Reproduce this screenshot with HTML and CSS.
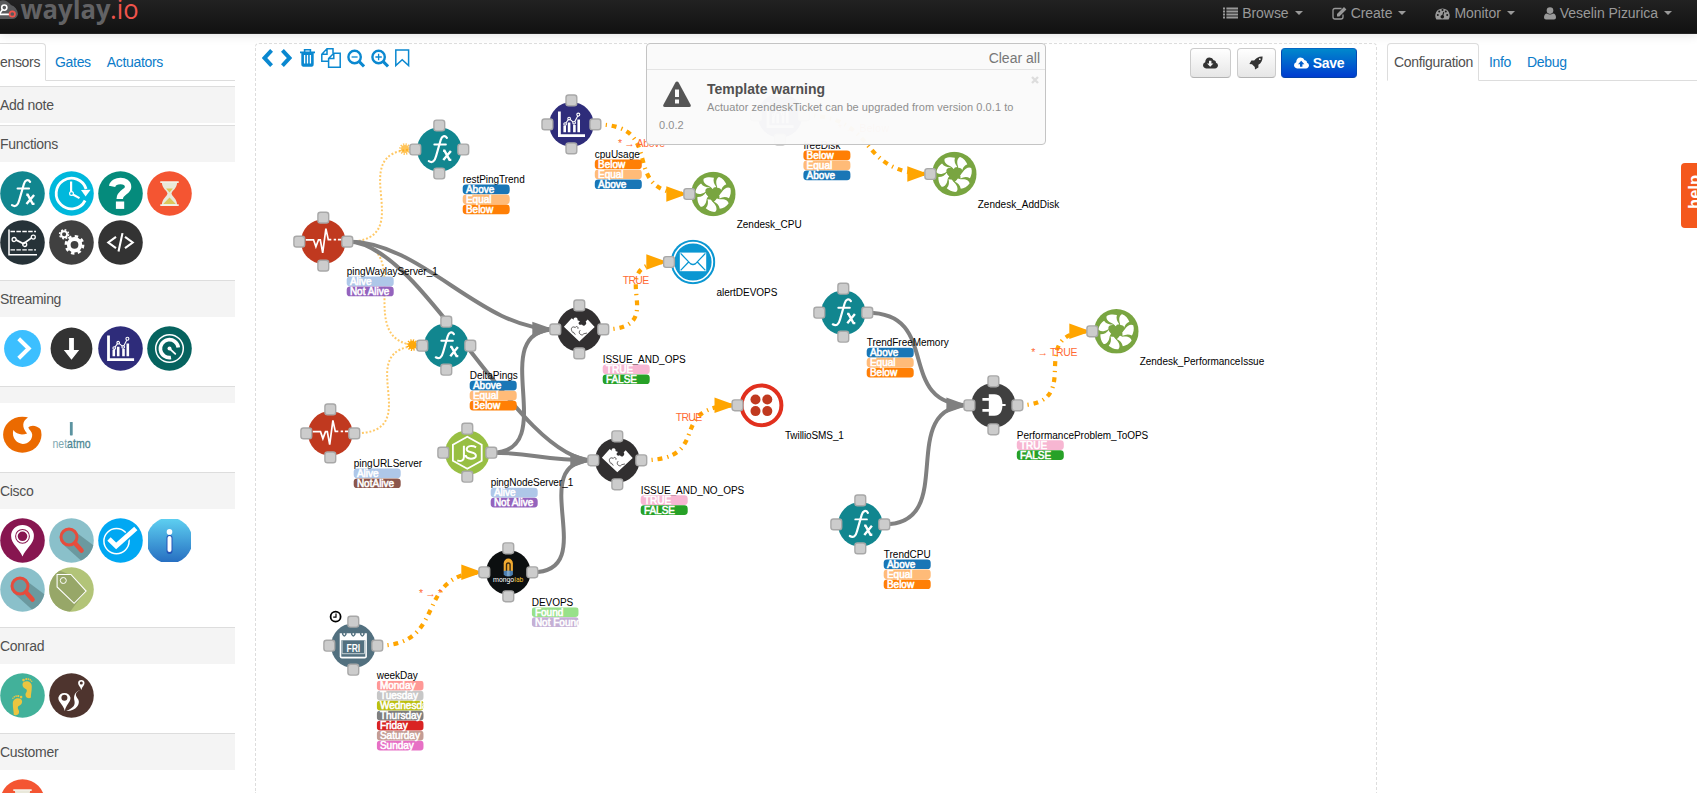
FILE: index.html
```
<!DOCTYPE html>
<html lang="en">
<head>
<meta charset="utf-8">
<title>waylay.io</title>
<link rel="stylesheet" href="styles.css">
</head>
<body>
<svg class="defs" aria-hidden="true">
  <defs>
    <linearGradient id="info-fill" x1="0" y1="0" x2="0" y2="1"><stop offset="0" stop-color="#5fd2f2"/><stop offset="1" stop-color="#256cc0"/></linearGradient>
    <clipPath id="disc"><circle r="22.3"/></clipPath>
    <clipPath id="square"><rect x="-21.6" y="-21.6" width="43.2" height="43.2"/></clipPath>
    <clipPath id="tag-clip"><rect x="23.4" y="0" width="47" height="120"/></clipPath>
    <symbol id="i-fx" viewBox="-22.5 -22.5 45 45">
      <circle r="22.3" fill="#11868f"/>
      <g fill="none" stroke="#fff" stroke-linecap="round"><path stroke-width="2.2" d="M7.6-11.6C5.5-14.8 2.6-13.5 1.4-9.5L-3.2 6.5C-4.6 12-7 13.8-10.5 11.6"/><path stroke-width="1.9" d="M-5-5H6.6"/><path stroke-width="2.4" stroke-linecap="butt" d="M3.8 1.2h1.4l5 9.2h1.8M11.6 1.4L4 10.6"/></g>
    </symbol>
    <symbol id="i-timer" viewBox="-22.5 -22.5 45 45">
      <circle r="22.3" fill="#00b8dc"/>
      <path d="M14.6-4.5A15.3 15.3 0 1 0 13.6 7" fill="none" stroke="#fff" stroke-width="2.8"/>
      <path d="M9.5-3.6l9.6-.2-5 6.8z" fill="#fff"/>
      <path d="M-.4-12V0L8 4.6" fill="none" stroke="#fff" stroke-width="2.2"/><circle r="1.9" fill="#00b8dc" stroke="#fff" stroke-width="1.2"/>
    </symbol>
    <symbol id="i-question" viewBox="-22.5 -22.5 45 45">
      <circle r="22.3" fill="#058b7c"/>
      <path d="M-8.4-7.2C-7-14.3 7.6-14.6 7.6-6.6C7.6-1.6-.8-1.4-.8 5.4" fill="none" stroke="#fff" stroke-width="6.4"/><rect x="-4.6" y="8" width="8.3" height="7.4" fill="#fff"/>
    </symbol>
    <symbol id="i-hourglass" viewBox="-22.5 -22.5 45 45">
      <circle r="22.3" fill="#f45532"/>
      <path d="M-7.6-11H7.6C7.6-5 2.5-3 2 0C2.5 3 7.6 5 7.6 11.5H-7.6C-7.6 5-2.5 3-2 0C-2.5-3-7.6-5-7.6-11z" fill="#e9e8da"/>
      <path d="M-3.4-5H3.4L0-1zM0 4L6.3 10.5H-6.3z" fill="#dcc65b"/><path d="M-9.2-11.4H9.2M-9.2 11.7H9.2" stroke="#f1efe6" stroke-width="1.8"/>
    </symbol>
    <symbol id="i-lines" viewBox="-22.5 -22.5 45 45">
      <circle r="22.3" fill="#263238"/>
      <g fill="none" stroke="#fff"><path stroke-width="1.5" d="M-13.5-13V12.2H14.5"/><path stroke-width="1.3" stroke-dasharray="4.5 1.4" d="M-12-11H13.5M-12 7.3H13.5"/><path stroke-width="1.8" d="M-6.6-2.6L1 1.3L9-4.6"/><circle cx="-8.4" cy="-3" r="2" stroke-width="1.3"/><circle cx="2.2" cy="2" r="2" stroke-width="1.3"/><circle cx="10.8" cy="-5.4" r="2" stroke-width="1.3"/></g>
    </symbol>
    <symbol id="i-gears" viewBox="-22.5 -22.5 45 45">
      <circle r="22.3" fill="#404040"/>
      <g fill="none" stroke="#fff"><circle cx="3" cy="2.3" r="5.8" stroke-width="3.8"/><circle cx="3" cy="2.3" r="8.6" stroke-width="2.6" stroke-dasharray="3.4 3.35"/><circle cx="-7.4" cy="-8.2" r="3" stroke-width="1.9"/><circle cx="-7.4" cy="-8.2" r="4.5" stroke-width="1.5" stroke-dasharray="1.8 1.73"/></g>
    </symbol>
    <symbol id="i-code" viewBox="-22.5 -22.5 45 45">
      <circle r="22.3" fill="#333"/>
      <path d="M-4.5-5.6L-12.2 0L-4.5 5.6M4.5-5.6L12.2 0L4.5 5.6M2-9.4L-2 9" fill="none" stroke="#fff" stroke-width="2.1"/>
    </symbol>
    <symbol id="i-next" viewBox="-22.5 -22.5 45 45"><circle r="18.4" fill="#3cbfff"/><path d="M-3.8-9.8L6.2 0L-3.8 9.8" fill="none" stroke="#fff" stroke-width="4"/></symbol>
    <symbol id="i-down" viewBox="-22.5 -22.5 45 45"><circle r="20.9" fill="#333"/><path d="M-2.4-10.5H2.4V1.5H7.7L0 11.3L-7.7 1.5H-2.4z" fill="#fff"/></symbol>
    <symbol id="i-chart" viewBox="-22.5 -22.5 45 45">
      <circle r="22.3" fill="#2e2c7a"/>
      <path d="M-12-13V11.2H13.6" fill="none" stroke="#fff" stroke-width="2.8"/>
      <path d="M-8 1.4h2.6v6.4h-2.6zM-3.6-1.8h2.6v9.6h-2.6zM1.7.6h2.6v7.2h-2.6zM6-5h2.6V7.8H6z" fill="#fff"/>
      <g fill="#2e2c7a" stroke="#fff" stroke-width="1.1"><path fill="none" d="M-6.3-.4L-2.3-5.8L2.7-1.6L6.9-9.5"/><circle cx="-6.3" cy="-.4" r="1.3"/><circle cx="-2.3" cy="-5.8" r="1.3"/><circle cx="2.7" cy="-1.6" r="1.3"/><circle cx="6.9" cy="-9.8" r="1.5"/></g>
    </symbol>
    <symbol id="i-gauge" viewBox="-22.5 -22.5 45 45">
      <circle r="22.3" fill="#06635f"/>
      <g fill="none" stroke="#fff"><circle r="13.8" stroke-width="1.5"/><path stroke-width="3.6" d="M1.5 9A9 9 0 1 1 8.8-1"/><path stroke-width="1.8" stroke-linecap="round" d="M-.4-.4L5.8 5.4"/></g><circle r="2" fill="#fff"/>
    </symbol>
    <symbol id="i-flame" viewBox="-22.5 -22.5 45 45">
      <ellipse cx="-.2" cy=".2" rx="19.2" ry="18" fill="#eb6a00"/>
      <path d="M5.4-20V-17C0-13.6-1.2-7.6 4.6-1C-.8 1-6 0-9.2-4.4C-11.2 4-5 9.4.3 9.4C6 9.4 10 5 9.7 0C9.5-3 6.6-4.6 5.8-7C8-9.2 13-10.4 19-4.6V-20z" fill="#fff"/>
    </symbol>
    <symbol id="i-netatmo" viewBox="-22.5 -22.5 45 45">
      <rect x="-1.6" y="-12.5" width="2.8" height="13.4" rx=".6" fill="#5b93a0"/>
      <text class="netatmo" x="-19" y="13.6" textLength="38" lengthAdjust="spacingAndGlyphs">net<tspan class="netatmo-strong">atmo</tspan></text>
    </symbol>
    <symbol id="i-pin" viewBox="-22.5 -22.5 45 45">
      <circle r="22.3" fill="#871650"/><path fill-rule="evenodd" d="M0 16C-3 8-11.4 3.5-11.4-4.6A11.4 11 0 0 1 11.4-4.6C11.4 3.5 3 8 0 16zM0-11.6a7.4 7.4 0 1 0 0 14.8a7.4 7.4 0 1 0 0-14.8z" fill="#fff"/><circle cy="-4.2" r="5.6" fill="none" stroke="#fff" stroke-width="1.6"/>
    </symbol>
    <symbol id="i-search" viewBox="-22.5 -22.5 45 45">
      <circle r="22.3" fill="#8ac0ca"/><path clip-path="url(#disc)" d="M3.5-9L26 8V25H15L-9.5 3z" fill="#6b999f"/>
      <circle cx="-2.5" cy="-3.5" r="8" fill="#6b999f" stroke="#e74c3c" stroke-width="3"/><path d="M3.6 2.8L10 10" stroke="#e74c3c" stroke-width="4.6" stroke-linecap="round"/>
    </symbol>
    <symbol id="i-check" viewBox="-22.5 -22.5 45 45">
      <circle r="22.3" fill="#00a8f3"/><circle cx="-4" cy=".6" r="12.6" fill="none" stroke="#fff" stroke-width="1.5"/><path d="M-11.5-1L-4.3 6.4L15-12" fill="none" stroke="#00a8f3" stroke-width="7.6"/><path d="M-11.5-1.5L-4.3 5.4L15.3-12" fill="none" stroke="#fff" stroke-width="4.8"/>
    </symbol>
    <symbol id="i-info" viewBox="-22.5 -22.5 45 45">
      <circle r="23" clip-path="url(#square)" fill="url(#info-fill)"/><circle cy="-8.6" r="2.8" fill="#fff"/><path d="M0-2.6V10.4" stroke="#2456b8" stroke-width="6" stroke-linecap="round"/><path d="M0-2.6V9.6" stroke="#fff" stroke-width="4" stroke-linecap="round"/>
    </symbol>
    <symbol id="i-tag" viewBox="-22.5 -22.5 45 45">
      <circle r="22.3" fill="#b2c478"/><path clip-path="url(#disc)" d="M-24-24L0-14L14.6 1L-2 23H-24z" fill="#97a768"/><path d="M-14.4-15H-.6L14.6 1.6L2.6 13.8L-14.4-2.6z" fill="#97a768" stroke="#fff" stroke-width="1.1"/><circle cx="-8.2" cy="-9" r="3" fill="none" stroke="#fff"/>
    </symbol>
    <symbol id="i-feet" viewBox="-22.5 -22.5 45 45">
      <circle r="22.3" fill="#42b19a"/>
      <g id="foot"><path d="M0-11C0-15 9-16 9.3-9C9.3-4 8.2-1 8.4 2C7.6 3.4 3 3 3-.5C3-3.2 5-3.4 4-6C2.6-7 0-8 0-11z" fill="#ecc540"/><g fill="#ecc540"><circle cx="1" cy="-15.4" r="1.3"/><circle cx="3.8" cy="-16.4" r="1.1"/><circle cx="6" cy="-16.4" r=".9"/><circle cx="7.8" cy="-15.6" r=".8"/><circle cx="9.2" cy="-14.2" r=".7"/></g></g>
      <g transform="translate(-.4 17) scale(-1 1)"><use href="#foot"/></g>
    </symbol>
    <symbol id="i-route" viewBox="-22.5 -22.5 45 45">
      <circle r="22.3" fill="#4e342e"/>
      <path fill-rule="evenodd" d="M-6.7 15.5C-8 9-13.2 7-13.2 2.2A6.3 6.3 0 0 1-1 2.2C-1 7-5.6 9-6.7 15.5zM-7.1-.7a3 3 0 1 0 0 6a3 3 0 1 0 0-6zM9.8-5.6C9-8.6 6.6-9.6 6.6-12.4A3.2 3.2 0 0 1 13-12.4C13-9.6 10.6-8.6 9.8-5.6zM9.8-14a1.5 1.5 0 1 0 0 3a1.5 1.5 0 1 0 0-3z" fill="#fff"/>
      <path d="M9-5.4C2-2.6 4.4 1 6.8 4C9 8 5 15.8-5.2 15.6C2.6 12 3.6 9.6 3 5.6C2 1.6 2.4-3.6 9-5.4z" fill="#fff"/>
    </symbol>
    <symbol id="i-pulse" viewBox="-22.5 -22.5 45 45">
      <circle r="22.3" fill="#c0391f"/><path d="M-17.5-1.8H-9.8L-7.4 5.2L-4.8-1.8L-3-1.8L-.6 11.2L2.6-13L5-2H8M10.4-2h2.4M14.6-2H18" fill="none" stroke="#fff" stroke-width="1.7"/>
    </symbol>
    <symbol id="i-node" viewBox="-22.5 -22.5 45 45">
      <circle r="22.3" fill="#98bf43"/><path d="M0-16L14.4-8V8L0 16L-14.4 8V-8z" fill="none" stroke="#fff" stroke-width="1.8"/><path d="M-3.4-7V4.6C-3.4 8-6.6 9-10 7.6M8.8-5.4C5-7.6-.6-7-.6-3.4C-.6.8 8.6-1.6 8.6 3.2C8.6 7-1.6 7-1.6 2.4" fill="none" stroke="#fff" stroke-width="2"/>
    </symbol>
    <symbol id="i-puzzle" viewBox="-22.5 -22.5 45 45">
      <circle r="22.3" fill="#312f30"/>
      <path d="M-15.4-2.6L-7.6-11.2L-5.6-9.6Q-6-12-3.6-12Q-1.2-11.6-1.8-9.2L.8-8.2Q-1.6-6.6-.2-5Q1.4-4.2 2.6-5Q4.4-2.6 6.2-4.6Q7.8-6.4 6.4-8L8.4-10L15.4-2.4L0 12z" fill="#fff"/>
      <path d="M-6.6 3C-10-1.6-6-3.6-4.2-1.8C-3-4-.6-2.4-1.4-.6M3 5.6C0 5.4-1 2.6 1 .8M3 5.6C5 3.4 6.4 4.4 7.6 3.6M-6.6 3C-5 2-5.6 5-3.8 5" fill="none" stroke="#312f30" stroke-width=".8"/>
    </symbol>
    <symbol id="i-gate" viewBox="-22.5 -22.5 45 45">
      <circle r="22.3" fill="#404040"/><path d="M-4.6-11H1C6.6-11 8.8-7 9-1.4H12.2V.8H9C8.8 6.4 6.6 10.4 1 10.4H-4.6V6.4H-11V3.6H-4.6V-4.6H-11V-7.4H-4.6z" fill="#fff"/>
    </symbol>
    <symbol id="i-mongo" viewBox="-22.5 -22.5 45 45">
      <circle r="22.3" fill="#0c0f10"/><path d="M-4.6-9A4.6 4.8 0 0 1 4.6-9V-1H-4.6z" fill="#f3ab30"/><path d="M-1.8-1V-7.5A1.8 1.8 0 0 1 1.8-7.5V-1" fill="none" stroke="#3a2c14" stroke-width="1.4"/><path d="M-4.6-1.6H4.6V2.4L2.4 4H-2.4L-4.6 2.4z" fill="#4c7fb0"/><path d="M-1.4-1.6h2.8V4h-2.8z" fill="#7aa4c8"/>
      <text class="mongo" x="-15.3" y="10" textLength="30.4" lengthAdjust="spacingAndGlyphs">mongo<tspan class="mongo-lab">lab</tspan></text>
    </symbol>
    <symbol id="i-calendar" viewBox="-22.5 -22.5 45 45">
      <circle r="22.3" fill="#52707f"/><path d="M-13.6-12.4H13.6V10.6Q13.6 12.8 11.4 12.8H-11.4Q-13.6 12.8-13.6 10.6z" fill="#fff"/><rect x="-12" y="-5.4" width="24" height="16.4" fill="#52707f"/><path d="M-11.2-5.2V8H11.2V-5.2" fill="none" stroke="#dfe6e9" stroke-width=".8"/>
      <g fill="none" stroke="#52707f" stroke-width="1.5"><path d="M-10.6-15v3.6q1.6 3.4 3.2 0V-15M-1.6-15v3.6q1.6 3.4 3.2 0V-15M7.4-15v3.6q1.6 3.4 3.2 0V-15"/></g>
      <text class="fri" x="-6.9" y="6" textLength="13.8" lengthAdjust="spacingAndGlyphs">FRI</text>
    </symbol>
    <symbol id="i-mail" viewBox="-22.5 -22.5 45 45">
      <circle r="22.3" fill="#0b97d2"/><circle r="19.4" fill="none" stroke="#fff" stroke-width="1.6"/><rect x="-13.2" y="-9.4" width="26.4" height="18.6" fill="#fff"/><path d="M-12.4-8.6L-2.6 1.6Q0 3.4 2.6 1.6L12.4-8.6M-12.4 8.4L-4.6.2M12.4 8.4L4.6.2" fill="none" stroke="#0b97d2" stroke-width="1.3"/>
    </symbol>
    <symbol id="i-twilio" viewBox="-22.5 -22.5 45 45">
      <circle r="19.9" fill="#fff" stroke="#e1301e" stroke-width="4"/><g fill="#c0391f"><circle cx="-6" cy="-5.8" r="5"/><circle cx="5.8" cy="-5.8" r="5"/><circle cx="-6" cy="5.8" r="5"/><circle cx="5.8" cy="5.8" r="5"/></g>
    </symbol>
    <symbol id="i-zendesk" viewBox="-22.5 -22.5 45 45">
      <circle r="22.3" fill="#79a541"/>
      <g fill="#fff"><path id="leaf" d="M-3.4-7.6C-8.8-9.4-10.6-13-9.6-15.2C-6.4-17.2-2.4-17 .6-16.2C-.4-12.6.8-9.8 3-7Q0-7-.8-4.6Q-1.6-6.6-3.4-7.6z"/><use href="#leaf" transform="rotate(51.4)"/><use href="#leaf" transform="rotate(102.9)"/><use href="#leaf" transform="rotate(154.3)"/><use href="#leaf" transform="rotate(205.7)"/><use href="#leaf" transform="rotate(257.1)"/><use href="#leaf" transform="rotate(308.6)"/></g>
      <path d="M0 8.4C-4 4.2-8-.4-8-3C-8-6.8-2.4-7.4 0-4.4C2.4-7.4 8-6.8 8-3C8-.4 4 4.2 0 8.4z" fill="#79a541"/>
    </symbol>
    <g id="port"><rect x="-5.4" y="-5.4" width="10.8" height="10.8" rx="2.6" fill="#ccc" stroke="#a8a8a8" stroke-width="1.4"/></g>
    <g id="ports"><use href="#port" y="-24"/><use href="#port" x="24"/><use href="#port" y="24"/><use href="#port" x="-24"/></g>
    <path id="tag" d="M26.8 0h40.2q3.4 0 3.4 3.4v2.9q0 3.4-3.4 3.4H26.8q-3.4 0-3.4-3.4V3.4Q23.4 0 26.8 0z"/>
    <path id="arrow" d="M-23-7.7L-3-.6V.6L-23 7.7z"/>
  </defs>
</svg>

<header class="navbar">
  <svg class="logo" width="140" height="34" viewBox="0 0 140 34">
    <path d="M-6 18V4Q4-4 11 5Q17 7 18 14Q17 19 12 19H-6z" fill="#58595b"/>
    <circle cx="4.3" cy="7.6" r="2.6" fill="none" stroke="#fff" stroke-width="1.6"/><path d="M2.6 9.6L-1 14.4H9" fill="none" stroke="#fff" stroke-width="1.6"/><circle cx="12.3" cy="14" r="2.7" fill="none" stroke="#f1544c" stroke-width="1.7"/>
    <text class="logo-name" x="20.6" y="19" textLength="90" lengthAdjust="spacingAndGlyphs">waylay</text>
    <text class="logo-io" x="110" y="19" textLength="28.5" lengthAdjust="spacingAndGlyphs">.io</text>
  </svg>
  <nav class="menu">
    <a class="menu-item"><svg width="15" height="12" viewBox="0 0 15 12"><path d="M0 1.5h2M3.4 1.5H15M0 4.5h2M3.4 4.5H15M0 7.5h2M3.4 7.5H15M0 10.5h2M3.4 10.5H15" stroke="#999" stroke-width="1.8"/></svg><span>Browse</span><i class="caret"></i></a>
    <a class="menu-item"><svg width="15" height="13" viewBox="0 0 15 13"><path d="M9.5 1.5H3Q1 1.5 1 3.5V10Q1 12 3 12H9Q11 12 11 10V7.5" fill="none" stroke="#999" stroke-width="1.3"/><path d="M5 9.4V7L12 0L14.4 2.4L7.4 9.4z" fill="#999"/></svg><span>Create</span><i class="caret"></i></a>
    <a class="menu-item"><svg width="15" height="13" viewBox="0 0 15 13"><path d="M1.4 12.4A7.2 7.2 0 1 1 13.6 12.4z" fill="#999"/><g fill="#191919"><circle cx="2.8" cy="8" r="1"/><circle cx="4.2" cy="4.4" r="1"/><circle cx="7.5" cy="3" r="1"/><circle cx="10.8" cy="4.4" r="1"/><circle cx="12.2" cy="8" r="1"/><circle cx="7.3" cy="9.8" r="1.8"/></g><path d="M7.3 9.8L8.8 5" stroke="#191919" stroke-width="1.1"/></svg><span>Monitor</span><i class="caret"></i></a>
    <a class="menu-item"><svg class="user" width="12" height="13" viewBox="0 0 12 13"><circle cx="6" cy="3.6" r="3.3" fill="#999"/><path d="M0 10.6Q0 6.6 3 6.4Q6 8.6 9 6.4Q12 6.6 12 10.6Q12 12.6 10 12.6H2Q0 12.6 0 10.6z" fill="#999"/></svg><span>Veselin Pizurica</span><i class="caret"></i></a>
  </nav>
</header>

<main class="main">
  <aside class="palette">
    <div class="tabs palette-tabs"><a class="tab active">Sensors</a><a class="tab">Gates</a><a class="tab">Actuators</a></div>
    <h4 class="group note">Add note</h4>
    <h4 class="group">Functions</h4>
    <div class="icons">
      <svg><use href="#i-fx"/></svg><svg><use href="#i-timer"/></svg><svg><use href="#i-question"/></svg><svg><use href="#i-hourglass"/></svg>
      <svg><use href="#i-lines"/></svg><svg><use href="#i-gears"/></svg><svg><use href="#i-code"/></svg>
    </div>
    <h4 class="group">Streaming</h4>
    <div class="icons"><svg><use href="#i-next"/></svg><svg><use href="#i-down"/></svg><svg><use href="#i-chart"/></svg><svg><use href="#i-gauge"/></svg></div>
    <h4 class="group blank"></h4>
    <div class="icons"><svg><use href="#i-flame"/></svg><svg><use href="#i-netatmo"/></svg></div>
    <h4 class="group">Cisco</h4>
    <div class="icons"><svg><use href="#i-pin"/></svg><svg><use href="#i-search"/></svg><svg><use href="#i-check"/></svg><svg><use href="#i-info"/></svg><svg><use href="#i-search"/></svg><svg><use href="#i-tag"/></svg></div>
    <h4 class="group">Conrad</h4>
    <div class="icons"><svg><use href="#i-feet"/></svg><svg><use href="#i-route"/></svg></div>
    <h4 class="group">Customer</h4>
    <div class="icons"><svg><use href="#i-hourglass"/></svg></div>
  </aside>

  <section class="workspace">
    <svg class="diagram" viewBox="255 43 1122 750" width="1122" height="750">
      <g class="dots">
        <path d="M347.3 241.6C423 241.6 339 149.5 415 149.5"/>
        <path d="M347.3 241.6C423 241.6 346 345.7 422 345.7"/>
        <path d="M354.3 433.4C430 433.4 346 345.7 422 345.7"/>
      </g>
      <g class="wires">
        <path d="M347.3 241.6C423.3 241.6 479.3 329.4 555.3 329.4"/>
        <path d="M347.3 241.6C423.3 241.6 517.3 460.3 593.3 460.3"/>
        <path d="M491.3 452.7C563 452.7 483 329.4 555.3 329.4"/>
        <path d="M491.3 452.7C537 452.7 537 460.3 593.3 460.3"/>
        <path d="M532.3 572.3C603 572.3 522 460.3 593.3 460.3"/>
        <path d="M867.3 312.7C943.3 312.7 893.4 405.3 969.4 405.3"/>
        <path d="M884.3 524.3C960 524.3 894 405.3 969.4 405.3"/>
      </g>
      <g class="dashes">
        <path d="M595.5 124.4C671 124.4 614 194 689.3 194"/>
        <path d="M804 115.3C880 115.3 854.3 174 930.3 174"/>
        <path d="M603.3 329.4C676 329.4 597 262 669.3 262"/>
        <path d="M641.3 460.3C717 460.3 662 405.3 737.5 405.3"/>
        <path d="M1017.4 405.3C1090 405.3 1020 331.3 1092.3 331.3"/>
        <path d="M377.3 645.7C450 645.7 412 572.3 484.3 572.3"/>
      </g>
      <g fill="#808080"><use href="#arrow" x="555.3" y="329.4"/><use href="#arrow" x="593.3" y="460.3"/><use href="#arrow" x="969.4" y="405.3"/></g>
      <g fill="#ffa500"><use href="#arrow" x="689.3" y="194"/><use href="#arrow" x="930.3" y="174"/><use href="#arrow" x="669.3" y="262"/><use href="#arrow" x="737.5" y="405.3"/><use href="#arrow" x="1092.3" y="331.3"/><use href="#arrow" x="484.3" y="572.3"/></g>
      <g fill="none" stroke="#ffa500"><g opacity=".65"><circle cx="405" cy="149" r="2" stroke-width="4"/><circle cx="405" cy="149" r="4.7" stroke-width="2.4" stroke-dasharray="1.2 1.26"/></g><g opacity=".95"><circle cx="412.3" cy="345" r="2" stroke-width="4.4"/><circle cx="412.3" cy="345" r="4.7" stroke-width="2.4" stroke-dasharray="1.2 1.26"/></g></g>
      <g class="edge-label">
        <text x="618" y="147" textLength="47">* → Above</text><text x="838" y="132" textLength="51">* → Below</text>
        <text x="622.8" y="284" textLength="26.4">TRUE</text><text x="675.8" y="421" textLength="26.4">TRUE</text>
        <text x="1031.2" y="356" textLength="46.4">* → TRUE</text><text x="419" y="596.5" textLength="23">* → *</text>
      </g>

      <g class="node" transform="translate(439.3 149.5)"><use href="#i-fx" x="-22.5" y="-22.5" width="45" height="45"/><use href="#ports"/><text x="23.4" y="33.6" textLength="62">restPingTrend</text>
        <g class="tags" transform="translate(0 35)"><use href="#tag" class="blue"/><use href="#tag" class="peach" y="10"/><use href="#tag" class="orange" y="20"/><text x="26.6" y="8.4">Above</text><text x="26.6" y="18.4">Equal</text><text x="26.6" y="28.4">Below</text></g></g>
      <g class="node" transform="translate(323.3 241.6)"><use href="#i-pulse" x="-22.5" y="-22.5" width="45" height="45"/><use href="#ports"/><text x="23.4" y="33.6" textLength="91">pingWaylayServer_1</text>
        <g class="tags" transform="translate(0 35)"><use href="#tag" class="sky"/><use href="#tag" class="purple" y="10"/><text x="26.6" y="8.4">Alive</text><text x="26.6" y="18.4">Not Alive</text></g></g>
      <g class="node" transform="translate(446.3 345.7)"><use href="#i-fx" x="-22.5" y="-22.5" width="45" height="45"/><use href="#ports"/><text x="23.4" y="33.6" textLength="48">DeltaPings</text>
        <g class="tags" transform="translate(0 35)"><use href="#tag" class="blue"/><use href="#tag" class="peach" y="10"/><use href="#tag" class="orange" y="20"/><text x="26.6" y="8.4">Above</text><text x="26.6" y="18.4">Equal</text><text x="26.6" y="28.4">Below</text></g></g>
      <g class="node" transform="translate(330.3 433.4)"><use href="#i-pulse" x="-22.5" y="-22.5" width="45" height="45"/><use href="#ports"/><text x="23.4" y="33.6" textLength="68.5">pingURLServer</text>
        <g class="tags" transform="translate(0 35)"><use href="#tag" class="sky"/><use href="#tag" class="brown" y="10"/><text x="26.6" y="8.4">Alive</text><text x="26.6" y="18.4">NotAlive</text></g></g>
      <g class="node" transform="translate(467.3 452.7)"><use href="#i-node" x="-22.5" y="-22.5" width="45" height="45"/><use href="#ports"/><text x="23.4" y="33.6" textLength="82.5">pingNodeServer_1</text>
        <g class="tags" transform="translate(0 35)"><use href="#tag" class="sky"/><use href="#tag" class="purple" y="10"/><text x="26.6" y="8.4">Alive</text><text x="26.6" y="18.4">Not Alive</text></g></g>
      <g class="node" transform="translate(571.4 124.4)"><use href="#i-chart" x="-22.5" y="-22.5" width="45" height="45"/><use href="#ports"/><text x="23.4" y="33.6" textLength="45">cpuUsage</text>
        <g class="tags" transform="translate(0 35)"><use href="#tag" class="orange"/><use href="#tag" class="peach" y="10"/><use href="#tag" class="blue" y="20"/><text x="26.6" y="8.4">Below</text><text x="26.6" y="18.4">Equal</text><text x="26.6" y="28.4">Above</text></g></g>
      <g class="node" transform="translate(780 115.5)"><use href="#i-chart" x="-22.5" y="-22.5" width="45" height="45"/><use href="#ports"/><text x="23.4" y="33.6" textLength="37">freeDisk</text>
        <g class="tags" transform="translate(0 35)"><use href="#tag" class="orange"/><use href="#tag" class="peach" y="10"/><use href="#tag" class="blue" y="20"/><text x="26.6" y="8.4">Below</text><text x="26.6" y="18.4">Equal</text><text x="26.6" y="28.4">Above</text></g></g>
      <g class="node" transform="translate(579.3 329.4)"><use href="#i-puzzle" x="-22.5" y="-22.5" width="45" height="45"/><use href="#ports"/><text x="23.4" y="33.6" textLength="83">ISSUE_AND_OPS</text>
        <g class="tags" transform="translate(0 35)"><use href="#tag" class="pink"/><use href="#tag" class="green" y="10"/><text x="26.6" y="8.4">TRUE</text><text x="26.6" y="18.4">FALSE</text></g></g>
      <g class="node" transform="translate(617.3 460.3)"><use href="#i-puzzle" x="-22.5" y="-22.5" width="45" height="45"/><use href="#ports"/><text x="23.4" y="33.6" textLength="103.5">ISSUE_AND_NO_OPS</text>
        <g class="tags" transform="translate(0 35)"><use href="#tag" class="pink"/><use href="#tag" class="green" y="10"/><text x="26.6" y="8.4">TRUE</text><text x="26.6" y="18.4">FALSE</text></g></g>
      <g class="node" transform="translate(843.3 312.7)"><use href="#i-fx" x="-22.5" y="-22.5" width="45" height="45"/><use href="#ports"/><text x="23.4" y="33.6" textLength="82">TrendFreeMemory</text>
        <g class="tags" transform="translate(0 35)"><use href="#tag" class="blue"/><use href="#tag" class="peach" y="10"/><use href="#tag" class="orange" y="20"/><text x="26.6" y="8.4">Above</text><text x="26.6" y="18.4">Equal</text><text x="26.6" y="28.4">Below</text></g></g>
      <g class="node" transform="translate(860.3 524.4)"><use href="#i-fx" x="-22.5" y="-22.5" width="45" height="45"/><use href="#ports"/><text x="23.4" y="33.6" textLength="47">TrendCPU</text>
        <g class="tags" transform="translate(0 35)"><use href="#tag" class="blue"/><use href="#tag" class="peach" y="10"/><use href="#tag" class="orange" y="20"/><text x="26.6" y="8.4">Above</text><text x="26.6" y="18.4">Equal</text><text x="26.6" y="28.4">Below</text></g></g>
      <g class="node" transform="translate(993.4 405.3)"><use href="#i-gate" x="-22.5" y="-22.5" width="45" height="45"/><use href="#ports"/><text x="23.4" y="33.6" textLength="131.5">PerformanceProblem_ToOPS</text>
        <g class="tags" transform="translate(0 35)"><use href="#tag" class="pink"/><use href="#tag" class="green" y="10"/><text x="26.6" y="8.4">TRUE</text><text x="26.6" y="18.4">FALSE</text></g></g>
      <g class="node" transform="translate(508.3 572.3)"><use href="#i-mongo" x="-22.5" y="-22.5" width="45" height="45"/><use href="#ports"/><text x="23.4" y="33.6" textLength="41.5">DEVOPS</text>
        <g class="tags" transform="translate(0 35)" clip-path="url(#tag-clip)"><use href="#tag" class="mint"/><use href="#tag" class="lilac" y="10"/><text x="26.6" y="8.4">Found</text><text x="26.6" y="18.4">Not Found</text></g></g>
      <g class="node" transform="translate(353.3 645.7)"><use href="#i-calendar" x="-22.5" y="-22.5" width="45" height="45"/><use href="#ports"/><text x="23.4" y="33.6" textLength="41">weekDay</text>
        <g class="tags" transform="translate(0 35)" clip-path="url(#tag-clip)"><use href="#tag" class="salmon"/><use href="#tag" class="silver" y="10"/><use href="#tag" class="olive" y="20"/><use href="#tag" class="gray" y="30"/><use href="#tag" class="red" y="40"/><use href="#tag" class="rose" y="50"/><use href="#tag" class="magenta" y="60"/>
        <text x="26.6" y="8.4">Monday</text><text x="26.6" y="18.4">Tuesday</text><text x="26.6" y="28.4">Wednesday</text><text x="26.6" y="38.4">Thursday</text><text x="26.6" y="48.4">Friday</text><text x="26.6" y="58.4">Saturday</text><text x="26.6" y="68.4">Sunday</text></g></g>
      <g fill="none" stroke="#000"><circle cx="335.6" cy="616.7" r="5" stroke-width="1.8"/><path d="M336 613.4V617.2H333.2" stroke-width="1.2"/></g>
      <g class="node" transform="translate(713.3 194)"><use href="#i-zendesk" x="-22.5" y="-22.5" width="45" height="45"/><use href="#port" x="-24"/><text x="23.4" y="33.9" textLength="65">Zendesk_CPU</text></g>
      <g class="node" transform="translate(954.3 174)"><use href="#i-zendesk" x="-22.5" y="-22.5" width="45" height="45"/><use href="#port" x="-24"/><text x="23.4" y="33.9" textLength="81.5">Zendesk_AddDisk</text></g>
      <g class="node" transform="translate(1116.3 331.3)"><use href="#i-zendesk" x="-22.5" y="-22.5" width="45" height="45"/><use href="#port" x="-24"/><text x="23.4" y="33.6" textLength="124.5">Zendesk_PerformanceIssue</text></g>
      <g class="node" transform="translate(693 262)"><use href="#i-mail" x="-22.5" y="-22.5" width="45" height="45"/><use href="#port" x="-24"/><text x="23.4" y="33.9" textLength="61">alertDEVOPS</text></g>
      <g class="node" transform="translate(761.5 405.3)"><use href="#i-twilio" x="-22.5" y="-22.5" width="45" height="45"/><use href="#port" x="-24"/><text x="23.4" y="33.6" textLength="59">TwillioSMS_1</text></g>
    </svg>

    <div class="toolbar">
      <div class="tools">
        <svg class="tool-arrow" width="11" height="20" viewBox="0 0 11 20"><path d="M9.6 2.4L2.6 10L9.6 17.6" fill="none" stroke="#0a88d0" stroke-width="4"/></svg>
        <svg class="tool-arrow" width="11" height="20" viewBox="0 0 11 20"><path d="M1.4 2.4L8.4 10L1.4 17.6" fill="none" stroke="#0a88d0" stroke-width="4"/></svg>
        <svg class="tool-trash" width="15" height="20" viewBox="0 0 15 20"><path d="M0 4.4H15M4.6 4V1.8H10.4V4" fill="none" stroke="#0a88d0" stroke-width="1.6"/><path d="M1.3 5H13.7V16Q13.7 18.8 11.6 18.8H3.4Q1.3 18.8 1.3 16z" fill="#0a88d0"/><path d="M4.6 7v8.6M7.5 7v8.6M10.4 7v8.6" stroke="#fff" stroke-width="1.3"/></svg>
        <svg class="tool-copy" width="20" height="20" viewBox="0 0 20 20"><g fill="none" stroke="#0a88d0" stroke-width="1.5"><path d="M7.5 13.2H.8V6.2L6 .8H12V5.4M.8 6.2H6V.8"/><path d="M7.6 10.6L12.8 5.2H19.2V19.2H7.6zM7.6 10.6H12.8V5.2"/></g></svg>
        <svg class="tool-zoom" width="18" height="20" viewBox="0 0 18 20"><circle cx="7.6" cy="9" r="6.2" fill="none" stroke="#0a88d0" stroke-width="2.4"/><path d="M12 13.4L17 18.4" stroke="#0a88d0" stroke-width="3"/><path d="M4.6 9h6" stroke="#0a88d0" stroke-width="1.3"/></svg>
        <svg class="tool-zoom" width="18" height="20" viewBox="0 0 18 20"><circle cx="7.6" cy="9" r="6.2" fill="none" stroke="#0a88d0" stroke-width="2.4"/><path d="M12 13.4L17 18.4" stroke="#0a88d0" stroke-width="3"/><path d="M4.4 9h6.4M7.6 5.8v6.4" stroke="#0a88d0" stroke-width="1.3"/></svg>
        <svg class="tool-mark" width="15" height="20" viewBox="0 0 15 20"><path d="M.8 2H13.6V17.6L7.2 11.8L.8 17.6z" fill="none" stroke="#0a88d0" stroke-width="1.5"/></svg>
      </div>
      <div class="actions">
        <button class="btn cloud"><svg width="15" height="12" viewBox="0 0 15 12"><path d="M3.2 11.4Q0 11 0 8Q.2 5.8 2.2 5.2Q2.4.8 6.6.6Q9.6.6 10.6 3.2Q13 3.2 13 5.8Q15 6.6 15 8.6Q14.6 11.4 12 11.4z" fill="#333"/><path d="M6 3.8H8.4V6.4H10.4L7.2 9.8L4 6.4H6z" fill="#f4f4f4"/></svg></button>
        <button class="btn rocket"><svg width="14" height="14" viewBox="0 0 14 14"><path d="M13.6.4C9.6.2 7 2 5.2 4.6H2.4L.4 8L3 8.2L5.8 11L6 13.6L9.4 11.6V8.8C12 7 13.8 4.4 13.6.4z" fill="#333"/><circle cx="10.8" cy="3.2" r=".9" fill="#f4f4f4"/></svg></button>
        <button class="btn save"><svg width="15" height="12" viewBox="0 0 15 12"><path d="M3.2 11.4Q0 11 0 8Q.2 5.8 2.2 5.2Q2.4.8 6.6.6Q9.6.6 10.6 3.2Q13 3.2 13 5.8Q15 6.6 15 8.6Q14.6 11.4 12 11.4z" fill="#fff"/><path d="M6 9.8H8.4V7.2H10.4L7.2 3.8L4 7.2H6z" fill="#0660cc"/></svg><span>Save</span></button>
      </div>
    </div>

    <div class="notice">
      <div class="notice-head">Clear all</div>
      <div class="notice-body">
        <svg class="warn" width="28" height="26" viewBox="0 0 28 26"><path d="M14 .4Q15 .4 15.6 1.4L27.6 23.8Q28.4 26 26.2 26H1.8Q-.4 26 .4 23.8L12.4 1.4Q13 .4 14 .4z" fill="#555"/><path d="M12 8.4H16V16H12zM12 18.4H16V22.4H12z" fill="#fafafa"/></svg>
        <div class="notice-text"><strong>Template warning</strong><span>Actuator zendeskTicket can be upgraded from version 0.0.1 to</span></div>
        <svg class="close" width="8" height="8" viewBox="0 0 8 8"><path d="M1 1L7 7M7 1L1 7" stroke="#ddd" stroke-width="2.4"/></svg>
      </div>
      <div class="notice-rest">0.0.2</div>
    </div>
  </section>

  <aside class="props">
    <div class="tabs"><a class="tab active">Configuration</a><a class="tab">Info</a><a class="tab">Debug</a></div>
  </aside>
</main>
<div class="help"><span>help</span></div>
</body>
</html>
```
FILE: styles.css
```
* { box-sizing: border-box; }
html, body { height: 100%; }
body {
  margin: 0;
  overflow: hidden;
  display: flex;
  flex-direction: column;
  background: #fff;
  color: #505050;
  font: 14px/20px "Liberation Sans", Arial, sans-serif;
}
svg { display: block; flex: none; }
.defs { position: absolute; width: 0; height: 0; }

.navbar {
  flex: none;
  height: 34px;
  display: flex;
  justify-content: space-between;
  background: linear-gradient(#222, #111);
  border-bottom: 1px solid #252525;
  box-shadow: 0 1px 10px rgba(0, 0, 0, .12);
  position: relative;
}
.logo-name { font: 700 26px "Open Sans", sans-serif; fill: #626264; }
.logo-io { font: 400 27px "Open Sans", sans-serif; fill: #f1544c; }
.menu { display: flex; gap: 29px; height: 26px; padding-right: 25px; }
.menu-item { display: flex; align-items: center; color: #999; letter-spacing: -.04px; }
.menu-item span { margin: 0 6px 0 4px; }
.caret { border: 4px solid transparent; border-top-color: #999; border-bottom: 0; }

.main { flex: 1; min-height: 0; display: flex; padding-top: 9px; }

.tabs { display: flex; height: 38px; border-bottom: 1px solid #ddd; }
.tab { height: 38px; padding: 8px 5px 7px 6px; margin-right: 3px; border: 1px solid transparent; color: #0b7bc9; letter-spacing: -.33px; white-space: nowrap; }
.tab.active { color: #505050; background: #fff; border-color: #ddd #ddd #fff; border-radius: 4px 4px 0 0; }

.palette { width: 235px; flex: none; overflow: hidden; }
.palette-tabs { margin-left: -17px; margin-bottom: 5px; }
.palette-tabs .tab { margin-right: 2px; padding-left: 7px; }
.palette-tabs .tab:nth-child(n+2) { padding-left: 6px; padding-right: 6px; }
.group { margin: 0; height: 37px; padding-top: 8px; background: #f4f4f4; border-top: 1px solid #ddd; font-weight: 400; font-size: 14px; letter-spacing: -.3px; }
.group.note { margin-bottom: 2px; }
.group.blank { height: 17px; }
.icons { display: grid; grid-template-columns: repeat(4, 45px); gap: 4px; padding: 9px 0 15px; }
.icons svg { width: 45px; height: 45px; }
.netatmo { font: 400 13px "Liberation Sans", sans-serif; fill: #7fa9b2; }
.netatmo-strong { fill: #4d8794; stroke: #4d8794; stroke-width: .3px; }

.workspace { position: relative; width: 1122px; flex: none; margin-left: 20px; border: 1px dashed #ddd; border-bottom: 0; border-radius: 4px 4px 0 0; }
.diagram { position: absolute; left: -1px; top: -1px; }
.wires path { fill: none; stroke: #808080; stroke-width: 4; }
.dashes path { fill: none; stroke: #ffa500; stroke-width: 4.2; stroke-dasharray: 5 5 1.3 4.7; }
.dots path { fill: none; stroke: #ffa500; stroke-width: 2; stroke-dasharray: 1.9 1.9; opacity: .6; }
.edge-label text { font: 10.5px "Liberation Sans", Arial, "DejaVu Sans", sans-serif; fill: #ff6a35; }
.node text { font: 10px "Liberation Sans", Arial, sans-serif; fill: #000; }
.node .tags text { fill: #fff; stroke: #fff; stroke-width: .55px; }
.mongo { font: 400 7px "Roboto", sans-serif; fill: #fff; }
.mongo-lab { fill: #f3c230; }
.fri { font: 700 10px "Liberation Sans", sans-serif; fill: #fff; }
.blue { fill: #1976b6; } .peach { fill: #ffbb78; } .orange { fill: #ff7f05; }
.sky { fill: #aec7e8; } .purple { fill: #9463bd; } .brown { fill: #8c564b; }
.pink { fill: #f7b6d2; } .green { fill: #27a127; } .mint { fill: #98e18a; } .lilac { fill: #c5b0d5; }
.salmon { fill: #ff9896; } .silver { fill: #c7c7c7; } .olive { fill: #bcc010; } .gray { fill: #7f7f7f; }
.red { fill: #d92323; } .rose { fill: #c49c94; } .magenta { fill: #e770c5; }

.toolbar { position: relative; display: flex; justify-content: space-between; padding: 4px 19px 0 6px; }
.tools { display: flex; gap: 6px; height: 22px; }
.tool-arrow { margin-right: 2px; }
.actions { display: flex; gap: 5.5px; }
.btn {
  height: 30px;
  display: flex;
  align-items: center;
  justify-content: center;
  gap: 4px;
  padding: 0;
  border: 1px solid #ccc;
  border-bottom-color: #b3b3b3;
  border-radius: 4px;
  background: linear-gradient(#fff, #e6e6e6);
  font: 700 14px/20px "Liberation Sans", Arial, sans-serif;
}
.cloud { width: 41px; }
.rocket { width: 39px; }
.save { width: 76px; color: #fff; border-color: #0467c4 #0449b4 #0340a8; background: linear-gradient(#0088cc, #003cd0); }
.save span { letter-spacing: -.3px; }

.notice {
  position: absolute;
  left: 390px;
  top: -1px;
  width: 400px;
  height: 102px;
  background: rgba(250, 250, 250, .975);
  border: 1px solid #c4c4c4;
  border-radius: 4px;
}
.notice-head { height: 26px; padding: 4px 5px 0 0; border-bottom: 1px solid #e4e4e4; text-align: right; color: #777; }
.notice-body { display: flex; padding: 6px 6px 0 16px; }
.warn { margin-top: 5px; }
.notice-text { display: flex; flex-direction: column; flex: 1; margin: 3px 0 0 16px; white-space: nowrap; }
.notice-text strong { color: #505050; line-height: 20px; }
.notice-text span, .notice-rest { font-size: 11px; line-height: 16px; color: #8f8f8f; letter-spacing: .06px; }
.notice-rest { padding: 2px 0 0 12px; }

.props { flex: 1; margin-left: 10px; overflow: hidden; }

.help { position: absolute; right: 0; top: 163px; width: 16px; height: 65px; overflow: hidden; background: #f4581c; border-radius: 4px 0 0 4px; }
.help span { position: absolute; left: 4px; top: 12px; writing-mode: vertical-rl; transform: rotate(180deg); color: #fff; font: 700 16.5px/18px "Liberation Sans", Arial, sans-serif; }
```
